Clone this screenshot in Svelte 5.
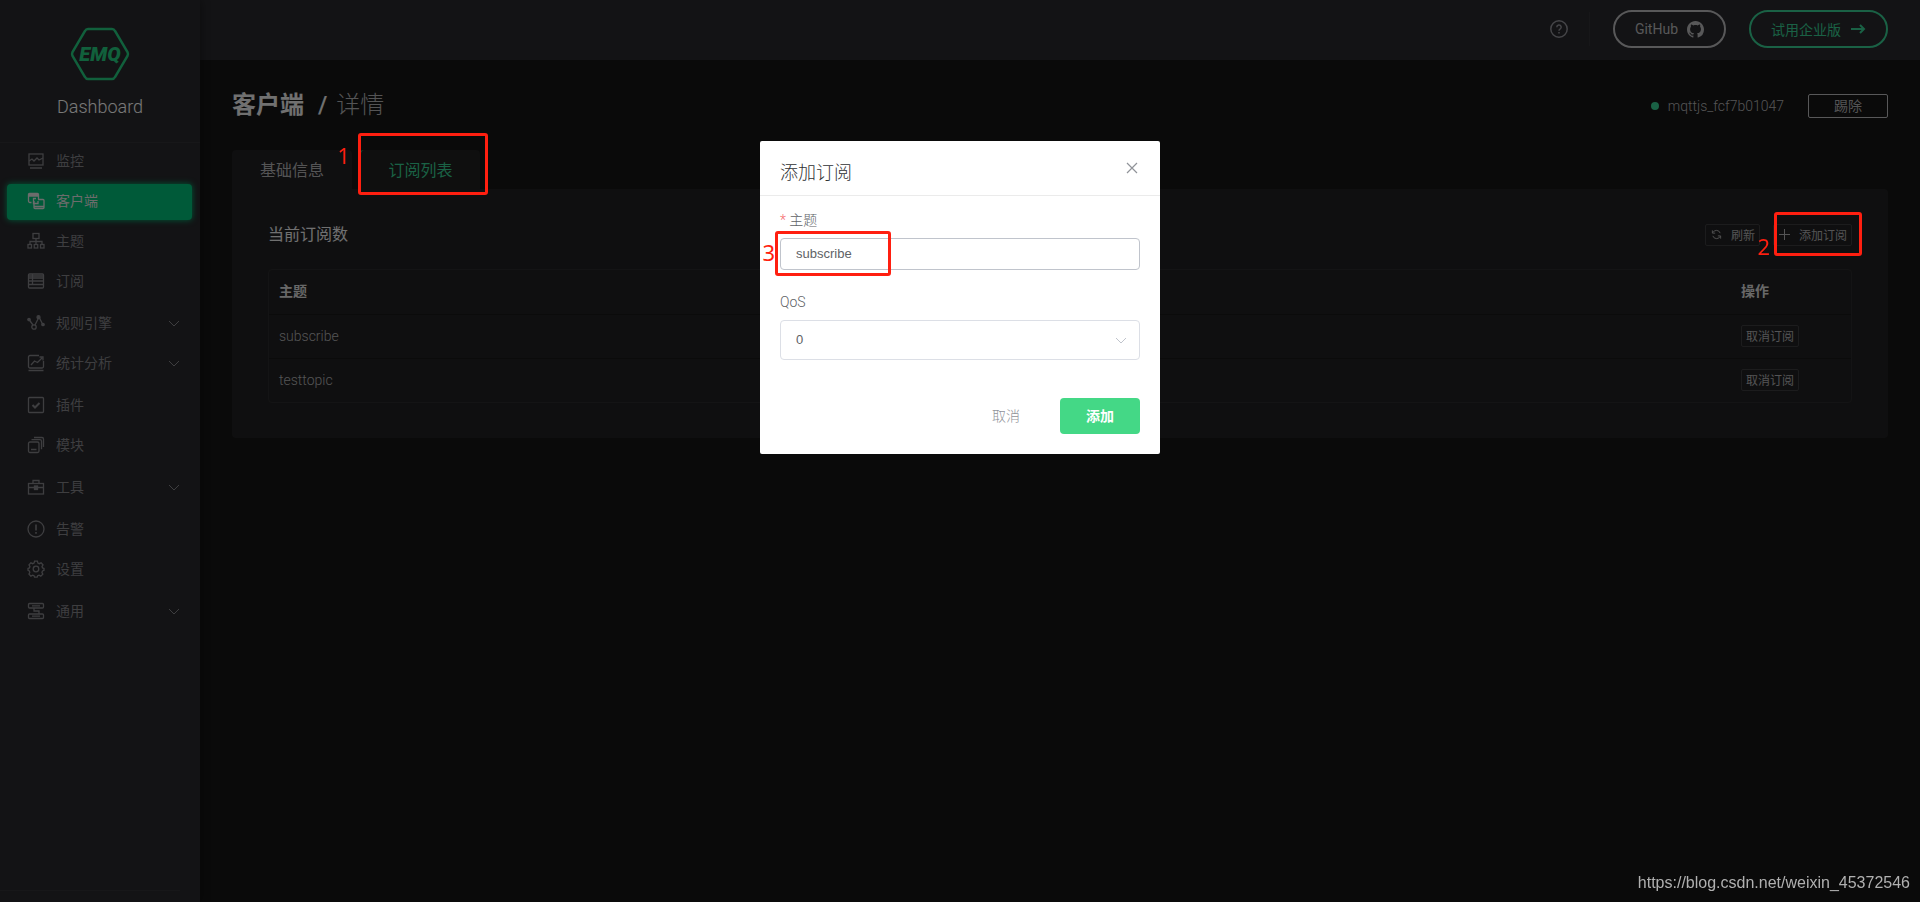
<script lang="ts">
  interface NavItem {
    label: string;
    icon: string;
    sub?: boolean;
    active?: boolean;
  }

  const nav: NavItem[] = [
    { label: '监控', icon: 'monitor' },
    { label: '客户端', icon: 'clients', active: true },
    { label: '主题', icon: 'topics' },
    { label: '订阅', icon: 'subs' },
    { label: '规则引擎', icon: 'rules', sub: true },
    { label: '统计分析', icon: 'stats', sub: true },
    { label: '插件', icon: 'plugins' },
    { label: '模块', icon: 'modules' },
    { label: '工具', icon: 'tools', sub: true },
    { label: '告警', icon: 'alarms' },
    { label: '设置', icon: 'settings' },
    { label: '通用', icon: 'general', sub: true },
  ];

  const subscriptions = ['subscribe', 'testtopic'];

  let topic = $state('subscribe');
  let qos = $state('0');
  let open = $state(true);
</script>

{#snippet navIcon(name: string)}
  <svg class="nav-icon" width="18" height="18" viewBox="0 0 18 18" fill="none" stroke="currentColor" stroke-width="1.3">
    {#if name === 'monitor'}
      <rect x="2" y="2" width="14" height="11"/>
      <path d="M2 9l3-2 2 2 3-3 2 2 4-2M3 16h12"/>
    {:else if name === 'clients'}
      <path d="M4.500 10.500H3a1.500 1.500 0 0 1-1.500-1.500V2.500a1 1 0 0 1 1-1h8a1 1 0 0 1 1 1V7.500M1.500 3h10M1.500 4h10"/>
      <path d="M11 7.500h5a1 1 0 0 1 1 1v7a1 1 0 0 1-1 1H8a1 1 0 0 1-1-1V9M7 14.500h10"/>
      <path d="M9 6.500H6.500v5H11V9"/>
    {:else if name === 'topics'}
      <rect x="6" y="1.500" width="6" height="5"/>
      <path d="M9 6.500v6M3 12.500V9.500h12v3"/>
      <rect x="1" y="12.500" width="3.500" height="3.500"/>
      <rect x="7.250" y="12.500" width="3.500" height="3.500"/>
      <rect x="13.500" y="12.500" width="3.500" height="3.500"/>
    {:else if name === 'subs'}
      <rect x="1.500" y="2" width="15" height="14" rx="1"/>
      <path d="M2 4h14M2 6h14M2 9h14M2 12.500h14M5.500 2v11"/>
    {:else if name === 'rules'}
      <path d="M2 5.500l4 5.500M8 11l3.500-7M12.500 4l3.500 7"/>
      <circle cx="7" cy="13" r="2.200"/>
      <g fill="currentColor"><circle cx="2" cy="5.500" r="1.200"/><circle cx="11.500" cy="3.200" r="1.500"/><circle cx="16" cy="10.500" r="1.200"/></g>
    {:else if name === 'stats'}
      <path d="M12 1.500H3A1.500 1.500 0 0 0 1.500 3v9.500A1.500 1.500 0 0 0 3 14h12a1.500 1.500 0 0 0 1.500-1.500V7M1.500 16.500h15"/>
      <path d="M4 11l3.500-4 3 1.500L15 4M12.500 3H16v3.500"/>
    {:else if name === 'plugins'}
      <rect x="1.500" y="1.500" width="15" height="15" rx="1"/>
      <path d="M5.500 9l2.500 2.500L12.500 7" stroke-width="2"/>
    {:else if name === 'modules'}
      <rect x="1.500" y="6" width="10.500" height="10.500" rx="1.500"/>
      <path d="M4.500 3.700h8.500a1.500 1.500 0 0 1 1.500 1.500v8M7 1.500h8a1.500 1.500 0 0 1 1.500 1.500v8M4 13.500h5.500"/>
    {:else if name === 'tools'}
      <rect x="1.500" y="5.500" width="15" height="10.500"/>
      <path d="M6 5V2.500h6V5M1.500 9.500h15"/>
      <rect x="7.500" y="8" width="3" height="3.500" fill="currentColor"/>
    {:else if name === 'alarms'}
      <circle cx="9" cy="9" r="8"/>
      <path d="M9 4.500v6M9 12v1.700" stroke-width="1.600"/>
    {:else if name === 'settings'}
      <circle cx="9" cy="9" r="2.800"/>
      <path d="M7.600 1.200h2.800l.5 1.900 1.300.6 1.900-.9 1.900 2-1 1.800.5 1.300 1.500.6v1.900l-1.500.6-.6 1.400.9 1.800-2 1.900-1.700-.9-1.400.5-.5 1.500H7.600l-.6-1.500-1.300-.5-1.800.9-1.900-2 .8-1.700-.5-1.400L1 10.400V8.500l1.400-.6.5-1.300-.9-1.800 1.900-2 1.800.9L7 3.100z"/>
    {:else}
      <rect x="1.500" y="1.500" width="15" height="4.500" rx="1"/>
      <rect x="1.500" y="12" width="15" height="4.500" rx="1"/>
      <path d="M7 6v3h5v3M5 3.800h8M5 14.200h8"/>
    {/if}
  </svg>
{/snippet}

{#snippet chevron()}
  <svg class="chevron" width="12" height="12" viewBox="0 0 12 12" fill="none" stroke="currentColor">
    <path d="M1 4l5 5 5-5"/>
  </svg>
{/snippet}

<div class="app">
  <aside class="sidebar">
    <div class="brand">
      <svg width="60" height="54" viewBox="0 0 60 54">
        <path d="M18 2h24q2 0 3 2l12.500 21q1 2 0 4L45 50q-1 2-3 2H18q-2 0-3-2L2.500 29q-1-2 0-4L15 4q1-2 3-2z" fill="none" stroke="#22c078" stroke-width="2.500"/>
        <text x="30" y="34" text-anchor="middle">EMQ</text>
      </svg>
      <span>Dashboard</span>
    </div>
    <nav>
      {#each nav as item}
        <a href="#{item.icon}" class={['nav-item', item.sub ? 'sub' : 'leaf', item.active && 'active']}>
          {@render navIcon(item.icon)}
          <span>{item.label}</span>
          {#if item.sub}{@render chevron()}{/if}
        </a>
      {/each}
    </nav>
    <div class="sidebar-foot"></div>
  </aside>

  <div class="content">
    <header class="topbar">
      <button class="help" aria-label="Help">
        <svg width="20" height="20" viewBox="0 0 20 20" fill="none" stroke="currentColor" stroke-width="1.500">
          <circle cx="10" cy="10" r="8.200"/>
          <path d="M7.800 8.300a2.200 2.200 0 1 1 3.200 1.900q-1 .5-1 1.600M10 13v1.500"/>
        </svg>
      </button>
      <a class="pill" href="#github">
        GitHub
        <svg width="17" height="17" viewBox="0 0 16 16" fill="currentColor">
          <path d="M8 0C3.580 0 0 3.580 0 8c0 3.540 2.290 6.530 5.470 7.590.4.070.55-.17.55-.38 0-.19-.01-.82-.01-1.490-2.010.37-2.530-.49-2.690-.94-.09-.23-.48-.94-.82-1.130-.28-.15-.68-.52-.01-.53.63-.01 1.080.58 1.230.82.72 1.210 1.870.87 2.330.66.07-.52.28-.87.51-1.070-1.780-.2-3.640-.89-3.640-3.950 0-.87.31-1.590.82-2.150-.08-.2-.36-1.020.08-2.120 0 0 .67-.21 2.200.82.64-.18 1.320-.27 2-.27s1.360.09 2 .27c1.530-1.040 2.200-.82 2.200-.82.44 1.100.16 1.920.08 2.120.51.56.82 1.270.82 2.150 0 3.070-1.870 3.750-3.650 3.950.29.25.54.73.54 1.480 0 1.070-.01 1.930-.01 2.200 0 .21.15.46.55.38A8.010 8.010 0 0 0 16 8c0-4.420-3.580-8-8-8z"/>
        </svg>
      </a>
      <a class="pill green" href="#enterprise">
        试用企业版
        <svg width="16" height="16" viewBox="0 0 16 16" fill="none" stroke="currentColor" stroke-width="2">
          <path d="M1 8h13M10 4l4 4-4 4"/>
        </svg>
      </a>
    </header>

    <main>
      <div class="page-head">
        <h1>客户端 <span class="slash">/</span> <span class="current">详情</span></h1>
        <span class="dot"></span>
        <span class="client-id">mqttjs_fcf7b01047</span>
        <button class="kick">踢除</button>
      </div>

      <div class="tabs" role="tablist">
        <button class="tab" role="tab" aria-selected="false">基础信息</button>
        <div class="marked">
          <button class="tab current-tab" role="tab" aria-selected="true">订阅列表</button>
          <span class="mark mark-tab"><b>1</b></span>
        </div>
      </div>

      <section class="panel">
        <div class="panel-head">
          <h2>当前订阅数</h2>
          <button class="small">
            <svg width="11" height="11" viewBox="0 0 12 12" fill="none" stroke="currentColor">
              <path d="M2 7.500A4.300 4.300 0 0 0 10 8M10 4.500A4.300 4.300 0 0 0 2 4M1.500 1.500V4.500H4.500M10.500 10.500V7.500H7.500"/>
            </svg>
            刷新
          </button>
          <div class="marked">
            <button class="small">
              <svg width="11" height="11" viewBox="0 0 11 11" stroke="currentColor"><path d="M5.500 0v11M0 5.500h11"/></svg>
              添加订阅
            </button>
            <span class="mark mark-add"><b>2</b></span>
          </div>
        </div>
        <div class="table-wrap">
          <table>
            <thead>
              <tr><th>主题</th><th class="op">操作</th></tr>
            </thead>
            <tbody>
              {#each subscriptions as name}
                <tr><td>{name}</td><td class="op"><button class="small plain">取消订阅</button></td></tr>
              {/each}
            </tbody>
          </table>
        </div>
      </section>
    </main>
  </div>
</div>

{#if open}
  <div class="overlay">
    <div class="dialog" role="dialog" aria-modal="true" aria-labelledby="dialog-title">
      <div class="dialog-head">
        <h3 id="dialog-title">添加订阅</h3>
        <button class="close" aria-label="Close" onclick={() => (open = false)}>
          <svg width="12" height="12" viewBox="0 0 12 12" stroke="currentColor" stroke-width="1.200"><path d="M1 1l10 10M11 1L1 11"/></svg>
        </button>
      </div>
      <form onsubmit={(e) => e.preventDefault()}>
        <label for="topic"><i>*</i> 主题</label>
        <div class="marked">
          <input id="topic" type="text" bind:value={topic}/>
          <span class="mark mark-input"><b>3</b></span>
        </div>
        <label class="qos-label" for="qos">QoS</label>
        <div class="select">
          <select id="qos" bind:value={qos}>
            <option>0</option>
            <option>1</option>
            <option>2</option>
          </select>
          {@render chevron()}
        </div>
        <div class="actions">
          <button type="button" class="cancel" onclick={() => (open = false)}>取消</button>
          <button type="submit" class="submit">添加</button>
        </div>
      </form>
    </div>
  </div>
{/if}

<span class="watermark">https://blog.csdn.net/weixin_45372546</span>

<style>
  :global(body) {
    background: #141414;
    font-family: Roboto, 'Noto Sans CJK SC', sans-serif;
    font-size: 14px;
  }

  * {
    box-sizing: border-box;
  }

  button,
  input,
  select {
    font-family: inherit;
    font-size: 14px;
    padding: 0 0 2px;
    margin: 0;
    background: none;
    border: none;
    color: inherit;
  }

  button {
    cursor: pointer;
  }

  a {
    text-decoration: none;
    color: inherit;
  }

  h1,
  h2,
  h3 {
    margin: 0;
    font-weight: 400;
  }

  .app {
    display: flex;
    min-height: 100vh;
    color: #a8a8aa;
    font-weight: 300;
  }

  .sidebar {
    display: flex;
    flex-direction: column;
    width: 200px;
    flex: none;
    background: #26262a;
    box-shadow: 2px 0 8px rgba(0, 0, 0, 0.3);
    z-index: 1;
  }

  .sidebar-foot {
    height: 12px;
    margin: auto 20px 0 0;
    border-top: 1px solid #2e2e32;
  }

  .brand {
    height: 143px;
    padding-top: 27px;
    display: flex;
    flex-direction: column;
    align-items: center;
    gap: 14px;
    border-bottom: 1px solid #2e2e32;
    font-size: 18px;
    line-height: 24px;
    color: #f0f0f0;
  }

  .brand text {
    font: italic 900 20px Roboto, sans-serif;
    fill: #22c078;
  }

  nav {
    display: flex;
    flex-direction: column;
    gap: 4px;
    padding: 1px 8px 0 7px;
  }

  .nav-item {
    display: flex;
    align-items: center;
    height: 36px;
    padding: 0 12px 2px 20px;
    border-radius: 4px;
    font-weight: 400;
    color: #7c7c80;
  }

  .nav-item span {
    flex: 1;
    margin-left: 11px;
    line-height: 20px;
  }

  .leaf + .sub,
  .sub + .leaf {
    margin-top: 2px;
  }

  .active {
    background: #00b573;
    box-shadow: 0 0 6px #00b573;
    color: #d8d8d8;
  }

  .content {
    flex: 1;
    min-width: 0;
  }

  .topbar {
    height: 60px;
    background: #26262a;
    display: flex;
    align-items: center;
    justify-content: flex-end;
    padding: 0 32px 2px;
  }

  .help {
    display: flex;
    height: 34px;
    align-items: center;
    padding: 0 20px 0 0;
    margin-right: 23px;
    border-right: 1px solid #2e2e32;
    color: #8a8a90;
  }

  .pill {
    display: flex;
    align-items: center;
    gap: 9px;
    height: 38px;
    padding: 0 20px;
    border: 2px solid #b0b0b2;
    border-radius: 19px;
    font-weight: 400;
    color: #b0b0b2;
  }

  .green {
    margin-left: 23px;
    border-color: #34c38a;
    color: #34c38a;
  }

  main {
    padding: 28px 32px;
  }

  .page-head {
    display: flex;
    align-items: center;
    height: 36px;
  }

  h1 {
    flex: 1;
    padding-bottom: 2px;
    font-size: 24px;
    line-height: 32px;
    font-weight: 700;
    color: #e0e0e0;
  }

  .slash {
    margin: 0 3px 0 8px;
    font-weight: 500;
  }

  .current {
    font-weight: 300;
    color: #a8a8aa;
  }

  .dot {
    width: 8px;
    height: 8px;
    border-radius: 50%;
    background: #34c38a;
  }

  .client-id {
    margin: 0 24px 0 9px;
  }

  .kick {
    width: 80px;
    height: 24px;
    border: 1px solid #b0b0b2;
    border-radius: 2px;
  }

  .tabs {
    display: flex;
    gap: 8px;
    margin-top: 26px;
  }

  .tab {
    width: 120px;
    height: 39px;
    border-radius: 4px 4px 0 0;
    background: #1e1e21;
    font-size: 16px;
  }

  .current-tab {
    border-left: 1px solid #34c38a;
    background: #1e1e1e;
    color: #34c38a;
  }

  .panel {
    padding: 32px 36px 35px;
    border-radius: 0 4px 4px 4px;
    background: #1f1f20;
  }

  .panel-head {
    display: flex;
    align-items: center;
    height: 27px;
    gap: 13px;
    margin-bottom: 21px;
  }

  h2 {
    flex: 1;
    font-size: 16px;
    line-height: 24px;
    color: #e0e0e0;
  }

  .small {
    display: flex;
    align-items: center;
    gap: 9px;
    height: 22px;
    padding: 0 4px 1px 5px;
    border: 1px solid #38383b;
    border-radius: 2px;
    font-size: 12px;
  }

  .plain {
    padding: 0 4px 1px;
  }

  .table-wrap {
    border: 1px solid #29292b;
    border-radius: 4px;
  }

  table {
    width: 100%;
    border-collapse: collapse;
    text-align: left;
  }

  th,
  td {
    height: 44px;
    padding: 0 10px;
  }

  th {
    padding-bottom: 4px;
    font-weight: 700;
    color: #d0d0d0;
  }

  thead tr,
  tbody tr:not(:last-child) {
    border-bottom: 1px solid #161616;
  }

  .op {
    width: 120px;
  }

  .marked {
    position: relative;
  }

  /* Numbered step markers drawn over the controls */
  .mark {
    position: absolute;
    z-index: 20;
    border: 3px solid #ff1f10;
    border-radius: 3px;
    pointer-events: none;
  }

  .mark b {
    position: absolute;
    right: 100%;
    font: 400 22px/22px 'Noto Sans', sans-serif;
    color: #ff1f10;
  }

  .mark-tab {
    inset: -17px -8px -6px -2px;
  }

  .mark-tab b {
    top: 8px;
    margin-right: 11px;
  }

  .mark-add {
    inset: -12px -10px -10px 1px;
  }

  .mark-add b {
    top: 20px;
    margin-right: 7px;
  }

  .mark-input {
    inset: -7px auto -6px -5px;
    width: 116px;
  }

  .mark-input b {
    top: 7px;
    margin-right: 3px;
  }

  .overlay {
    position: fixed;
    inset: 0;
    z-index: 10;
    display: flex;
    align-items: flex-start;
    justify-content: center;
    padding-top: 141px;
    background: rgba(0, 0, 0, 0.5);
  }

  .dialog {
    width: 400px;
    border-radius: 2px;
    background: #fff;
    color: #606266;
  }

  .dialog-head {
    display: flex;
    align-items: center;
    justify-content: space-between;
    height: 55px;
    padding: 10px 20px 0;
    border-bottom: 1px solid #ebebeb;
  }

  h3 {
    font-size: 18px;
    line-height: 24px;
    font-weight: 300;
    color: #303133;
  }

  .close {
    display: flex;
    padding: 2px 2px 12px;
    color: #909399;
  }

  form {
    display: flex;
    flex-direction: column;
    padding: 14px 20px 20px;
  }

  label {
    line-height: 20px;
    margin-bottom: 8px;
    font-weight: 300;
  }

  label i {
    font-style: normal;
    color: #f56c6c;
  }

  input,
  select {
    display: block;
    width: 100%;
    padding: 0 15px 2px;
    border: 1px solid #dcdfe6;
    border-radius: 4px;
    font: 13px 'Liberation Sans', sans-serif;
    color: #606266;
  }

  input {
    height: 32px;
    border-color: #c0c4cc;
  }

  .qos-label {
    margin-top: 22px;
  }

  .select {
    position: relative;
  }

  select {
    height: 40px;
    appearance: none;
  }

  .select .chevron {
    position: absolute;
    top: 14px;
    right: 13px;
    color: #c0c4cc;
    pointer-events: none;
  }

  .actions {
    display: flex;
    justify-content: flex-end;
    gap: 40px;
    margin-top: 38px;
  }

  .cancel {
    font-weight: 300;
    color: #909399;
  }

  .submit {
    width: 80px;
    height: 36px;
    border-radius: 4px;
    background: #44d886;
    font-weight: 700;
    color: #fff;
  }

  .watermark {
    position: fixed;
    right: 10px;
    bottom: 9px;
    z-index: 20;
    font: 16px/20px 'Liberation Sans', sans-serif;
    color: #b0b0b0;
  }
</style>
